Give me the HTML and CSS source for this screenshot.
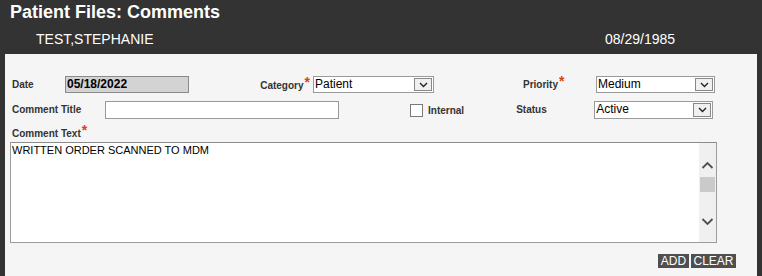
FILE: index.html
```html
<!DOCTYPE html>
<html>
<head>
<meta charset="utf-8">
<link rel="stylesheet" href="styles.css">
</head>
<body>
<div class="header">
  <h1 class="title">Patient Files: Comments</h1>
  <div class="patient"><span class="name">TEST,STEPHANIE</span><span class="dob">08/29/1985</span></div>
</div>
<div class="panel">
  <div class="row row1">
    <label class="lbl lbl-date">Date</label>
    <div class="input input-date">05/18/2022</div>
    <label class="lbl lbl-category">Category<span class="req">*</span></label>
    <div class="select select-category"><span class="val">Patient</span><span class="arrow"><svg width="9" height="6" viewBox="0 0 9 6"><polyline points="1,1 4.5,4.5 8,1" fill="none" stroke="#222" stroke-width="1.4"/></svg></span></div>
    <label class="lbl lbl-priority">Priority<span class="req">*</span></label>
    <div class="select select-priority"><span class="val">Medium</span><span class="arrow"><svg width="9" height="6" viewBox="0 0 9 6"><polyline points="1,1 4.5,4.5 8,1" fill="none" stroke="#222" stroke-width="1.4"/></svg></span></div>
  </div>
  <div class="row row2">
    <label class="lbl lbl-title">Comment Title</label>
    <div class="input input-title"></div>
    <span class="check"></span>
    <label class="lbl lbl-internal">Internal</label>
    <label class="lbl lbl-status">Status</label>
    <div class="select select-status"><span class="val">Active</span><span class="arrow"><svg width="9" height="6" viewBox="0 0 9 6"><polyline points="1,1 4.5,4.5 8,1" fill="none" stroke="#222" stroke-width="1.4"/></svg></span></div>
  </div>
  <div class="row row3">
    <label class="lbl lbl-text">Comment Text<span class="req">*</span></label>
  </div>
  <div class="textarea">
    <div class="ta-text">WRITTEN ORDER SCANNED TO MDM</div>
    <div class="scrollbar">
      <svg width="17" height="99" viewBox="0 0 17 99">
        <polyline points="3.5,25 8.5,20 13.5,25" fill="none" stroke="#505050" stroke-width="1.8"/>
        <rect x="1" y="34" width="15" height="15" fill="#cacaca"/>
        <polyline points="3.5,76 8.5,81 13.5,76" fill="none" stroke="#505050" stroke-width="1.8"/>
      </svg>
    </div>
  </div>
  <div class="buttons">
    <button class="btn btn-add">ADD</button>
    <button class="btn btn-clear">CLEAR</button>
  </div>
</div>
</body>
</html>
```
FILE: styles.css
```css
html, body {
  margin: 0;
  padding: 0;
  background: #333333;
  overflow: hidden;
  font-family: "Liberation Sans", Arial, sans-serif;
}
.header {
  height: 54px;
  box-sizing: border-box;
  padding-top: 1px;
  color: #ffffff;
}
.title {
  margin: 0;
  padding-left: 10px;
  font-size: 18px;
  line-height: 22px;
  font-weight: bold;
}
.patient {
  display: flex;
  margin-top: 8px;
  padding-left: 36px;
  font-size: 14px;
  line-height: 16px;
}
.name {
  flex: 0 0 569px;
}
.panel {
  margin: 0 5px;
  background: #f5f5f5;
  height: 222px;
  box-sizing: border-box;
  padding: 22px 0 0 5px;
}
.row {
  display: flex;
  align-items: center;
  padding-left: 2px;
}
.row1 { height: 17px; }
.row2 { height: 18px; margin-top: 8px; }
.row3 { height: 12px; margin-top: 8px; align-items: flex-start; }
.lbl {
  font-size: 10px;
  line-height: 12px;
  font-weight: bold;
  color: #333333;
  white-space: nowrap;
}
.req {
  color: #d9410f;
  font-size: 14px;
  line-height: 10px;
  font-weight: bold;
  position: relative;
  top: -2px;
  margin-left: 1px;
}
.lbl-date { width: 53px; }
.input {
  box-sizing: border-box;
  border: 1px solid #999999;
  background: #ffffff;
}
.input-date {
  width: 124px;
  height: 17px;
  border-color: #8a8a8a;
  background: #d3d3d3;
  font-size: 12px;
  font-weight: bold;
  line-height: 15px;
  padding-left: 1px;
  color: #000;
}
.lbl-category {
  width: 124px;
  text-align: right;
  padding-right: 3px;
  box-sizing: border-box;
  position: relative;
  top: 1px;
}
.select {
  display: flex;
  box-sizing: border-box;
  border: 1px solid #9a9a9a;
  background: #ffffff;
  font-size: 12px;
  color: #000;
}
.select .val {
  flex: 1;
  padding-left: 1px;
  line-height: 14px;
}
.select .arrow {
  width: 18px;
  box-sizing: border-box;
  margin: 1px;
  border: 1px solid #888888;
  background: #f0f0f0;
  display: flex;
  align-items: center;
  justify-content: center;
}
.select-category { width: 121px; height: 17px; }
.lbl-priority {
  margin-left: 89px;
  width: 73px;
}
.select-priority { width: 119px; height: 17px; }
.lbl-title { width: 93px; }
.input-title { width: 234px; height: 18px; }
.check {
  width: 13px;
  height: 13px;
  box-sizing: border-box;
  border: 1px solid #7a7a7a;
  background: #ffffff;
  margin-left: 71px;
}
.lbl-internal {
  margin-left: 5px;
  align-self: flex-end;
  margin-bottom: 2px;
}
.lbl-status {
  margin-left: 52px;
  width: 78px;
}
.select-status { width: 119px; height: 18px; }
.select-status .val { line-height: 15px; }
.textarea {
  display: flex;
  margin-top: 3px;
  width: 707px;
  height: 101px;
  box-sizing: border-box;
  border: 1px solid #9c9c9c;
  border-top-color: #8c8c8c;
  background: #ffffff;
}
.ta-text {
  flex: 1;
  padding: 1px 1px;
  font-size: 11px;
  line-height: 13px;
  color: #000;
}
.scrollbar {
  width: 17px;
  background: #f0f0f0;
  display: flex;
}
.buttons {
  display: flex;
  justify-content: flex-end;
  gap: 2px;
  margin-top: 11px;
  padding-right: 21px;
}
.btn {
  height: 14px;
  padding: 0;
  border: 0;
  background: #4f4f4f;
  color: #ffffff;
  font-family: "Liberation Sans Narrow", "Arial Narrow", "Liberation Sans", sans-serif;
  font-size: 12px;
  line-height: 14px;
  text-align: center;
}
.btn-add { width: 31px; }
.btn-clear { width: 45px; }
```
